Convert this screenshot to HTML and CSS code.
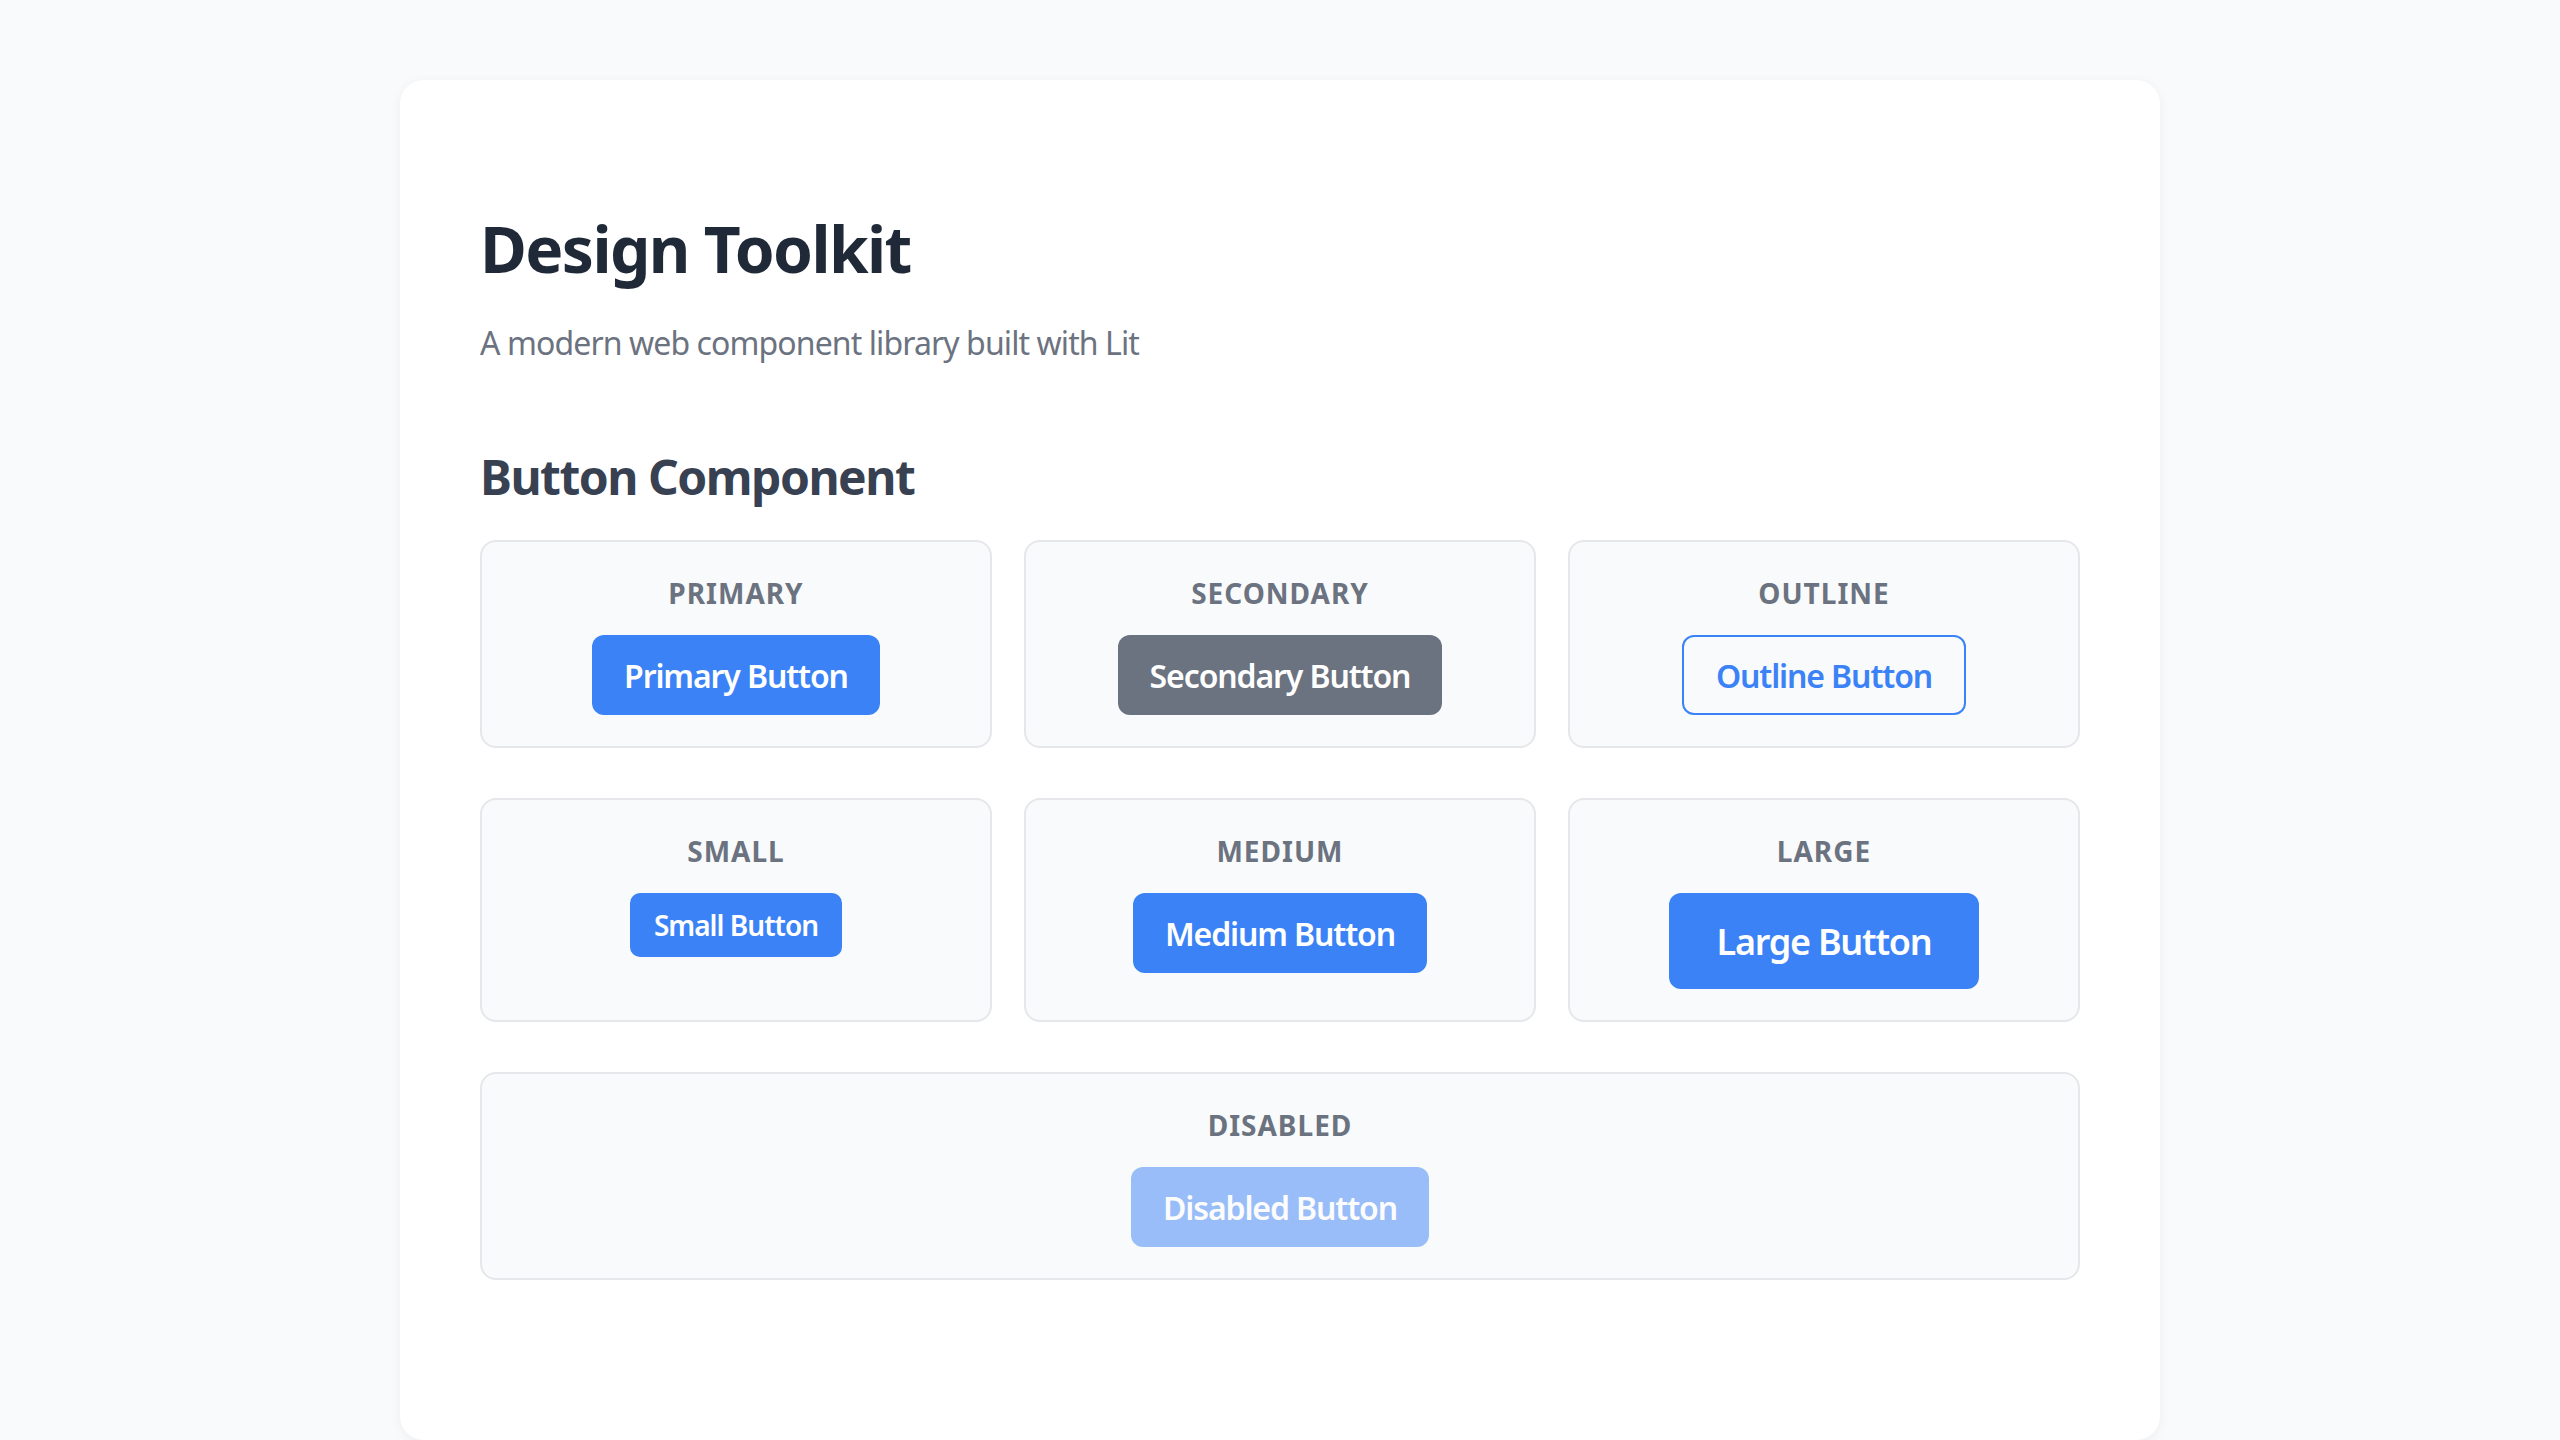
FILE: index.html
```html
<!DOCTYPE html>
<html lang="en">
<head>
<meta charset="utf-8">
<title>Design Toolkit</title>
<link rel="stylesheet" href="styles.css">
</head>
<body>
  <main class="page">
    <h1 class="title">Design Toolkit</h1>
    <p class="subtitle">A modern web component library built with Lit</p>

    <section class="section">
      <h2 class="section-title">Button Component</h2>
      <div class="demo-grid">
        <div class="demo">
          <div class="demo-label">Primary</div>
          <button class="btn btn-primary btn-md">Primary Button</button>
        </div>
        <div class="demo">
          <div class="demo-label">Secondary</div>
          <button class="btn btn-secondary btn-md">Secondary Button</button>
        </div>
        <div class="demo">
          <div class="demo-label">Outline</div>
          <button class="btn btn-outline btn-md">Outline Button</button>
        </div>
        <div class="demo">
          <div class="demo-label">Small</div>
          <button class="btn btn-primary btn-sm">Small Button</button>
        </div>
        <div class="demo">
          <div class="demo-label">Medium</div>
          <button class="btn btn-primary btn-md">Medium Button</button>
        </div>
        <div class="demo">
          <div class="demo-label">Large</div>
          <button class="btn btn-primary btn-lg">Large Button</button>
        </div>
        <div class="demo demo-wide">
          <div class="demo-label">Disabled</div>
          <button class="btn btn-primary btn-md" disabled>Disabled Button</button>
        </div>
      </div>
    </section>
  </main>
</body>
</html>
```

FILE: styles.css
```css
* {
  box-sizing: border-box;
}

html, body {
  margin: 0;
  padding: 0;
}

body {
  background: #f9fafb;
  font-family: "Noto Sans", "Open Sans", sans-serif;
  color: #1f2937;
  padding: 80px 0 0;
}

.page {
  width: 1760px;
  min-height: 1360px;
  margin: 0 auto;
  background: #ffffff;
  border-radius: 24px;
  box-shadow: 0 2px 12px rgba(0, 0, 0, 0.05);
  padding: 131px 80px 80px;
}

.title {
  margin: 0;
  font-size: 64px;
  line-height: 76.8px;
  font-weight: 700;
  letter-spacing: -1.6px;
  color: #1f2937;
}

.subtitle {
  margin: 31px 0 0;
  font-size: 32px;
  line-height: 48px;
  letter-spacing: -0.9px;
  color: #6b7280;
}

.section {
  margin-top: 81px;
}

.section-title {
  margin: 0 0 35px;
  font-size: 48px;
  line-height: 57.6px;
  font-weight: 700;
  letter-spacing: -1.5px;
  color: #374151;
}

.demo-grid {
  display: grid;
  grid-template-columns: repeat(3, 1fr);
  column-gap: 32px;
  row-gap: 50px;
}

.demo {
  background: #f9fafb;
  border: 2px solid #e5e7eb;
  border-radius: 16px;
  padding: 33px 32px 31px;
  display: flex;
  flex-direction: column;
  align-items: center;
}

.demo-wide {
  grid-column: 1 / -1;
}

.demo-label {
  font-size: 28px;
  line-height: 36px;
  font-weight: 700;
  text-transform: uppercase;
  letter-spacing: 1px;
  color: #6b7280;
  margin-bottom: 24px;
}

.btn {
  font-family: inherit;
  font-weight: 600;
  border: 0;
  border-radius: 12px;
  color: #ffffff;
  cursor: pointer;
  display: inline-flex;
  align-items: center;
  justify-content: center;
  letter-spacing: -0.035em;
}

.btn-md {
  font-size: 32px;
  height: 80px;
  padding: 0 32px;
}

.btn-sm {
  font-size: 28px;
  height: 64px;
  padding: 0 24px;
  border-radius: 10px;
}

.btn-lg {
  font-size: 36px;
  height: 96px;
  padding: 0 48px;
}

.btn-primary {
  background: #3b82f6;
}

.btn-secondary {
  background: #6b7280;
}

.btn-outline {
  background: transparent;
  color: #3b82f6;
  border: 2px solid #3b82f6;
}

.btn:disabled {
  opacity: 0.5;
  cursor: not-allowed;
}
```
